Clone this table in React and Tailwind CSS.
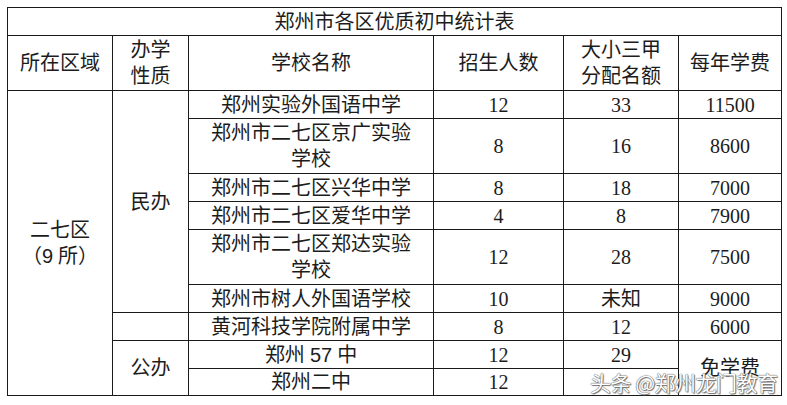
import React from "react";

const rows = [
  { name: ["郑州实验外国语中学"], n: "12", q: "33", fee: "11500", h: "h-[28px]" },
  { name: ["郑州市二七区京广实验", "学校"], n: "8", q: "16", fee: "8600", h: "h-[55px]" },
  { name: ["郑州市二七区兴华中学"], n: "8", q: "18", fee: "7000", h: "h-[28px]" },
  { name: ["郑州市二七区爱华中学"], n: "4", q: "8", fee: "7900", h: "h-[28px]" },
  { name: ["郑州市二七区郑达实验", "学校"], n: "12", q: "28", fee: "7500", h: "h-[55px]" },
  { name: ["郑州市树人外国语学校"], n: "10", q: "未知", fee: "9000", h: "h-[28px]" },
  { name: ["黄河科技学院附属中学"], n: "8", q: "12", fee: "6000", h: "h-[28px]" },
];

const td = "border border-[#1a1a1a] text-center align-middle p-0 leading-[26px]";
const sans = "font-['Liberation_Sans','Noto_Sans_CJK_SC',sans-serif]";

export default function App() {
  return (
    <div className="w-[787px] h-[405px] bg-white pt-[7px] pl-[7px] relative text-[#1c1c1c] text-[20px] font-normal font-['Liberation_Serif','Noto_Sans_CJK_SC',serif]">
      <table className="border-collapse table-fixed w-[774px]">
        <colgroup>
          <col className="w-[105px]" />
          <col className="w-[76px]" />
          <col className="w-[245px]" />
          <col className="w-[130px]" />
          <col className="w-[115px]" />
          <col className="w-[103px]" />
        </colgroup>
        <tbody>
          <tr className="h-[28px]">
            <td colSpan={6} className={td}>郑州市各区优质初中统计表</td>
          </tr>
          <tr className="h-[55px]">
            <td className={td}>所在区域</td>
            <td className={td}>办学<br />性质</td>
            <td className={td}>学校名称</td>
            <td className={td}>招生人数</td>
            <td className={td}>大小三甲<br />分配名额</td>
            <td className={td}>每年学费</td>
          </tr>
          {rows.map((r, i) => (
            <tr key={i} className={r.h}>
              {i === 0 && (
                <td rowSpan={9} className={td}>
                  二七区<br />
                  <span>（<span className={sans}>9</span> 所）</span>
                </td>
              )}
              {i === 0 && <td rowSpan={6} className={td}>民办</td>}
              {i === 6 && <td className={td}></td>}
              <td className={td}>
                {r.name.map((l, j) => (
                  <div key={j}>{l}</div>
                ))}
              </td>
              <td className={td}>{r.n}</td>
              <td className={td}>{r.q}</td>
              <td className={td}>{r.fee}</td>
            </tr>
          ))}
          <tr className="h-[28px]">
            <td rowSpan={2} className={td}>公办</td>
            <td className={td}>
              郑州 <span className={sans}>57</span> 中
            </td>
            <td className={td}>12</td>
            <td className={td}>29</td>
            <td rowSpan={2} className={td}>免学费</td>
          </tr>
          <tr className="h-[27px]">
            <td className={td}>郑州二中</td>
            <td className={td}>12</td>
            <td className={td}></td>
          </tr>
        </tbody>
      </table>
      <div className="absolute left-[590px] top-[369px] text-[21px] leading-[26px] font-normal tracking-[-0.5px] text-white font-['Noto_Sans_CJK_SC',sans-serif] [text-shadow:0_0_1px_#555,0_0_1px_#555,1px_1px_1px_#777]">
        头条 @郑州龙门教育
      </div>
    </div>
  );
}
